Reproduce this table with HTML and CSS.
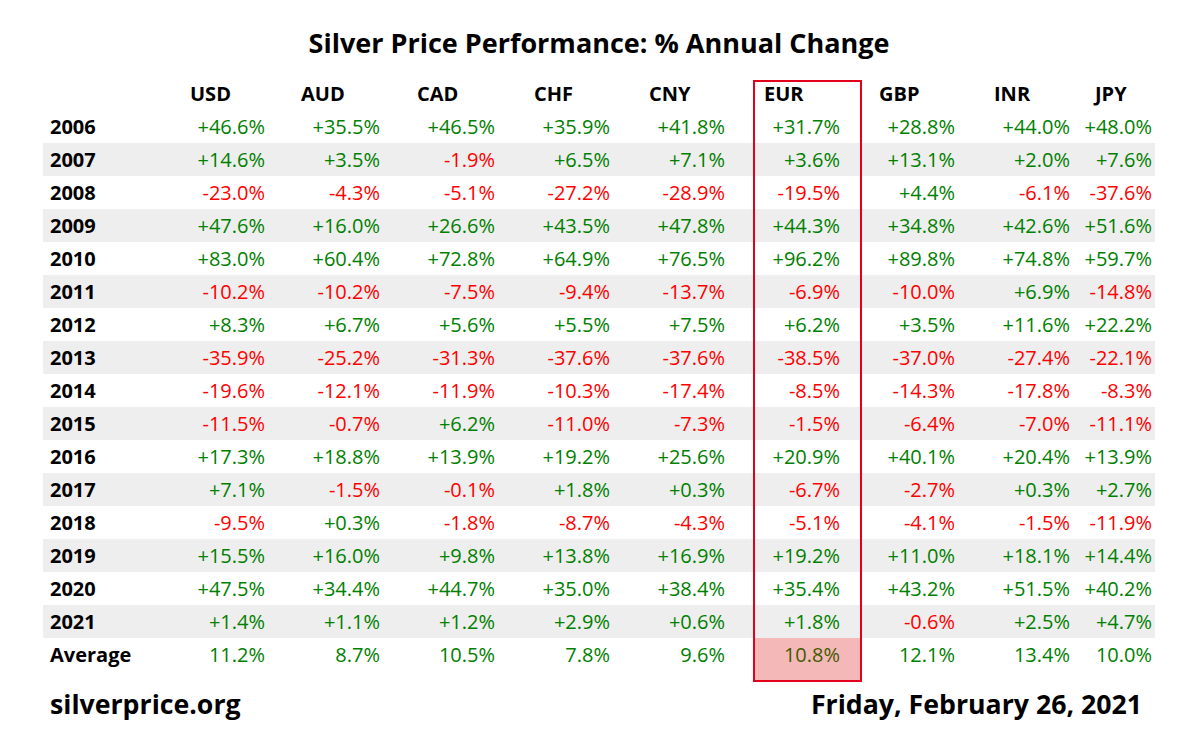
FILE: index.html
```html
<!DOCTYPE html>
<html>
<head>
<meta charset="utf-8">
<link rel="stylesheet" href="styles.css">
</head>
<body>
<div class="page">
  <h1 class="title">Silver Price Performance: % Annual Change</h1>
  <div class="table">
    <div class="row head">
      <div class="year"></div>
      <div class="hc h-usd">USD</div>
      <div class="hc h-aud">AUD</div>
      <div class="hc h-cad">CAD</div>
      <div class="hc">CHF</div>
      <div class="hc">CNY</div>
      <div class="hc">EUR</div>
      <div class="hc">GBP</div>
      <div class="hc">INR</div>
      <div class="hc h-jpy">JPY</div>
    </div>
    <div class="row"><div class="year">2006</div><div class="v g">+46.6%</div><div class="v g">+35.5%</div><div class="v g">+46.5%</div><div class="v g">+35.9%</div><div class="v g">+41.8%</div><div class="v g">+31.7%</div><div class="v g">+28.8%</div><div class="v g">+44.0%</div><div class="v g last">+48.0%</div></div>
    <div class="row alt"><div class="year">2007</div><div class="v g">+14.6%</div><div class="v g">+3.5%</div><div class="v r">-1.9%</div><div class="v g">+6.5%</div><div class="v g">+7.1%</div><div class="v g">+3.6%</div><div class="v g">+13.1%</div><div class="v g">+2.0%</div><div class="v g last">+7.6%</div></div>
    <div class="row"><div class="year">2008</div><div class="v r">-23.0%</div><div class="v r">-4.3%</div><div class="v r">-5.1%</div><div class="v r">-27.2%</div><div class="v r">-28.9%</div><div class="v r">-19.5%</div><div class="v g">+4.4%</div><div class="v r">-6.1%</div><div class="v r last">-37.6%</div></div>
    <div class="row alt"><div class="year">2009</div><div class="v g">+47.6%</div><div class="v g">+16.0%</div><div class="v g">+26.6%</div><div class="v g">+43.5%</div><div class="v g">+47.8%</div><div class="v g">+44.3%</div><div class="v g">+34.8%</div><div class="v g">+42.6%</div><div class="v g last">+51.6%</div></div>
    <div class="row"><div class="year">2010</div><div class="v g">+83.0%</div><div class="v g">+60.4%</div><div class="v g">+72.8%</div><div class="v g">+64.9%</div><div class="v g">+76.5%</div><div class="v g">+96.2%</div><div class="v g">+89.8%</div><div class="v g">+74.8%</div><div class="v g last">+59.7%</div></div>
    <div class="row alt"><div class="year">2011</div><div class="v r">-10.2%</div><div class="v r">-10.2%</div><div class="v r">-7.5%</div><div class="v r">-9.4%</div><div class="v r">-13.7%</div><div class="v r">-6.9%</div><div class="v r">-10.0%</div><div class="v g">+6.9%</div><div class="v r last">-14.8%</div></div>
    <div class="row"><div class="year">2012</div><div class="v g">+8.3%</div><div class="v g">+6.7%</div><div class="v g">+5.6%</div><div class="v g">+5.5%</div><div class="v g">+7.5%</div><div class="v g">+6.2%</div><div class="v g">+3.5%</div><div class="v g">+11.6%</div><div class="v g last">+22.2%</div></div>
    <div class="row alt"><div class="year">2013</div><div class="v r">-35.9%</div><div class="v r">-25.2%</div><div class="v r">-31.3%</div><div class="v r">-37.6%</div><div class="v r">-37.6%</div><div class="v r">-38.5%</div><div class="v r">-37.0%</div><div class="v r">-27.4%</div><div class="v r last">-22.1%</div></div>
    <div class="row"><div class="year">2014</div><div class="v r">-19.6%</div><div class="v r">-12.1%</div><div class="v r">-11.9%</div><div class="v r">-10.3%</div><div class="v r">-17.4%</div><div class="v r">-8.5%</div><div class="v r">-14.3%</div><div class="v r">-17.8%</div><div class="v r last">-8.3%</div></div>
    <div class="row alt"><div class="year">2015</div><div class="v r">-11.5%</div><div class="v r">-0.7%</div><div class="v g">+6.2%</div><div class="v r">-11.0%</div><div class="v r">-7.3%</div><div class="v r">-1.5%</div><div class="v r">-6.4%</div><div class="v r">-7.0%</div><div class="v r last">-11.1%</div></div>
    <div class="row"><div class="year">2016</div><div class="v g">+17.3%</div><div class="v g">+18.8%</div><div class="v g">+13.9%</div><div class="v g">+19.2%</div><div class="v g">+25.6%</div><div class="v g">+20.9%</div><div class="v g">+40.1%</div><div class="v g">+20.4%</div><div class="v g last">+13.9%</div></div>
    <div class="row alt"><div class="year">2017</div><div class="v g">+7.1%</div><div class="v r">-1.5%</div><div class="v r">-0.1%</div><div class="v g">+1.8%</div><div class="v g">+0.3%</div><div class="v r">-6.7%</div><div class="v r">-2.7%</div><div class="v g">+0.3%</div><div class="v g last">+2.7%</div></div>
    <div class="row"><div class="year">2018</div><div class="v r">-9.5%</div><div class="v g">+0.3%</div><div class="v r">-1.8%</div><div class="v r">-8.7%</div><div class="v r">-4.3%</div><div class="v r">-5.1%</div><div class="v r">-4.1%</div><div class="v r">-1.5%</div><div class="v r last">-11.9%</div></div>
    <div class="row alt"><div class="year">2019</div><div class="v g">+15.5%</div><div class="v g">+16.0%</div><div class="v g">+9.8%</div><div class="v g">+13.8%</div><div class="v g">+16.9%</div><div class="v g">+19.2%</div><div class="v g">+11.0%</div><div class="v g">+18.1%</div><div class="v g last">+14.4%</div></div>
    <div class="row"><div class="year">2020</div><div class="v g">+47.5%</div><div class="v g">+34.4%</div><div class="v g">+44.7%</div><div class="v g">+35.0%</div><div class="v g">+38.4%</div><div class="v g">+35.4%</div><div class="v g">+43.2%</div><div class="v g">+51.5%</div><div class="v g last">+40.2%</div></div>
    <div class="row alt"><div class="year">2021</div><div class="v g">+1.4%</div><div class="v g">+1.1%</div><div class="v g">+1.2%</div><div class="v g">+2.9%</div><div class="v g">+0.6%</div><div class="v g">+1.8%</div><div class="v r">-0.6%</div><div class="v g">+2.5%</div><div class="v g last">+4.7%</div></div>
    <div class="row"><div class="year">Average</div><div class="v g">11.2%</div><div class="v g">8.7%</div><div class="v g">10.5%</div><div class="v g">7.8%</div><div class="v g">9.6%</div><div class="v g">10.8%</div><div class="v g">12.1%</div><div class="v g">13.4%</div><div class="v g last">10.0%</div></div>
    <div class="highlight"><div class="highlight-fill"></div></div>
  </div>
  <div class="footer">
    <div class="site">silverprice.org</div>
    <div class="date">Friday, February 26, 2021</div>
  </div>
</div>
</body>
</html>
```

FILE: styles.css
```css
html, body {
  margin: 0;
  padding: 0;
  background: #ffffff;
}
body {
  font-family: "Open Sans", "Noto Sans", "DejaVu Sans", sans-serif;
  color: #000000;
}
.page {
  width: 1112px;
  padding-left: 43px;
  padding-top: 26px;
}
.title {
  margin: 0;
  font-size: 27px;
  font-weight: 700;
  line-height: 34px;
  text-align: center;
  height: 34px;
  padding-bottom: 17px;
}
.table {
  position: relative;
}
.row {
  display: grid;
  grid-template-columns: 108px repeat(8, 115px) 84px;
  height: 33px;
  align-items: center;
  font-size: 20px;
  line-height: 33px;
}
.row.alt {
  background: #eeeeee;
}
.year {
  font-weight: 700;
  padding-left: 7px;
}
.hc {
  font-weight: 700;
  padding-left: 38px;
}
.hc.h-usd {
  padding-left: 39px;
}
.hc.h-aud {
  padding-left: 35px;
}
.hc.h-cad {
  padding-left: 36px;
}
.hc.h-jpy {
  padding-left: 24px;
}
.v {
  text-align: right;
  padding-right: 1px;
}
.v.last {
  padding-right: 3px;
}
.g {
  color: #008000;
}
.r {
  color: #ff0000;
}
.highlight {
  position: absolute;
  left: 710px;
  top: 3px;
  width: 105px;
  height: 598px;
  border: 2px solid #e2001a;
  display: flex;
  flex-direction: column;
  justify-content: flex-end;
}
.highlight-fill {
  height: 42px;
  background: rgba(214, 0, 0, 0.28);
}
.footer {
  display: flex;
  justify-content: space-between;
  padding: 15px 13px 0 7px;
  font-size: 26.7px;
  font-weight: 700;
  line-height: 36px;
}
```
